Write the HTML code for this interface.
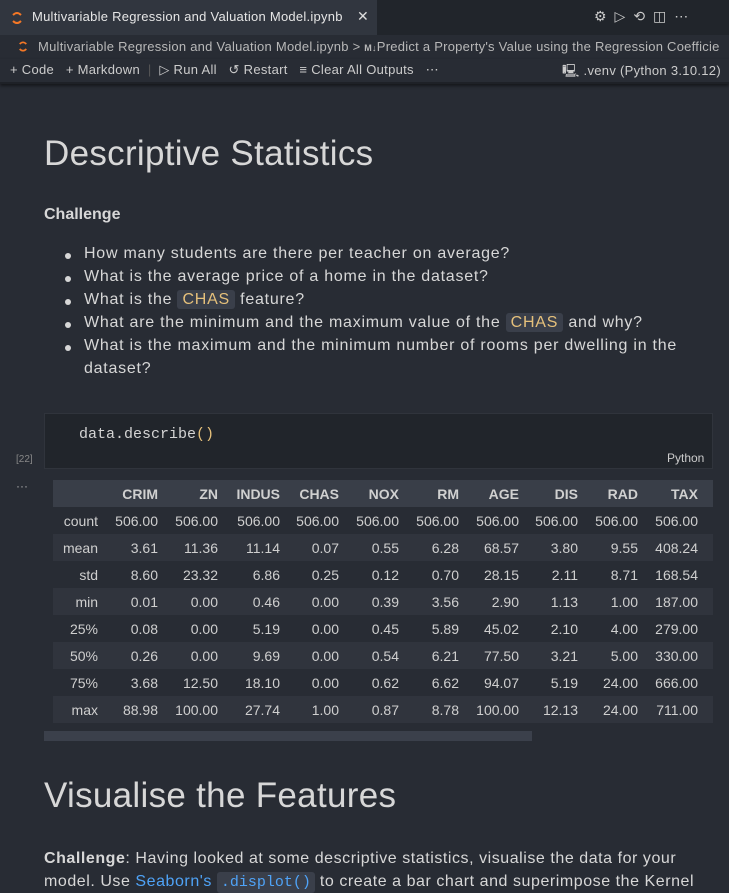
<!DOCTYPE html>
<html><head><meta charset="utf-8"><style>
*{margin:0;padding:0;box-sizing:border-box}
body{width:729px;height:884px;overflow:hidden;background:#282c34;font-family:"Liberation Sans",sans-serif;color:#d4d4d4;position:relative}
.a{position:absolute;white-space:nowrap}
.tabbar{position:absolute;left:0;top:0;width:729px;height:35px;background:#21252b}
.tab{position:absolute;left:0;top:0;width:377px;height:35px;background:#31363f;}
.bc{position:absolute;left:0;top:35px;width:729px;height:24px;background:#282c34}
.tb{position:absolute;left:0;top:59px;width:729px;height:25px;background:#282c34;border-bottom:2px solid #1e2127;box-shadow:0 2px 3px #15171b}
.chip{background:#3a3f4a;color:#e5c07b;font-size:16px;padding:1px 5px;border-radius:3px}
ul{list-style:none}
ul li{position:absolute;left:84px;font-size:16px;letter-spacing:0.75px;color:#d7d7d7;list-style:none}
ul li:before{content:"";position:absolute;left:-19px;top:8px;width:6px;height:6px;border-radius:50%;background:#d7d7d7}
li.nb:before{display:none}
table{position:absolute;left:53px;top:480px;border-collapse:collapse;font-size:14px;color:#cfcfcf}
td,th{height:27px;text-align:right;padding:0}
th{font-weight:bold;color:#d0d0d0}
tr.h{background:#393e48}
tr.s{background:#30343d}
.p{font-size:16px;letter-spacing:0.55px;color:#d7d7d7}
</style></head><body>
<div class="tabbar"></div>
<div class="tab"></div>
<svg class="a" style="left:11px;top:11px" width="12" height="14" viewBox="0 0 12 14"><path d="M2 4 Q6 0 10 4" stroke="#f37726" stroke-width="2" fill="none"/><path d="M2 10 Q6 14 10 10" stroke="#f37726" stroke-width="2" fill="none"/></svg>
<div class="a" style="left:32px;top:9px;font-size:13px;letter-spacing:0.25px;color:#e6e6e6">Multivariable Regression and Valuation Model.ipynb</div>
<div class="a" style="left:357px;top:8px;font-size:14px;color:#ddd">✕</div>
<div class="a" style="left:594px;top:8px;font-size:14px;color:#ccc;letter-spacing:8px">⚙▷⟲◫⋯</div>
<svg class="a" style="left:18px;top:40px" width="10" height="13" viewBox="0 0 12 14"><path d="M2 4 Q6 0 10 4" stroke="#f37726" stroke-width="2" fill="none"/><path d="M2 10 Q6 14 10 10" stroke="#f37726" stroke-width="2" fill="none"/></svg>
<div class="a" style="left:38px;top:39px;font-size:13px;letter-spacing:0.25px;color:#b8b8b8">Multivariable Regression and Valuation Model.ipynb &gt; <span style="font-size:9px;font-weight:bold">M↓</span>Predict a Property's Value using the Regression Coefficie</div>
<div class="tb"></div>
<div class="a" style="left:10px;top:62px;font-size:13px;letter-spacing:0.3px;color:#ccc">+ Code &nbsp;&nbsp;+ Markdown &nbsp;<span style="color:#555">|</span>&nbsp; ▷ Run All &nbsp;&nbsp;↺ Restart &nbsp;&nbsp;≡ Clear All Outputs &nbsp;&nbsp;⋯</div>
<div class="a" style="left:562px;top:62px;font-size:13px;letter-spacing:0.3px;color:#ccc">🖳 .venv (Python 3.10.12)</div>

<div class="a" style="left:44px;top:134px;font-size:35px;letter-spacing:0.3px;color:#d7d7d7">Descriptive Statistics</div>
<div class="a" style="left:44px;top:206px;font-size:16px;font-weight:bold;color:#d7d7d7">Challenge</div>
<ul>
<li style="top:245px">How many students are there per teacher on average?</li>
<li style="top:268px">What is the average price of a home in the dataset?</li>
<li style="top:291px">What is the <span class="chip">CHAS</span> feature?</li>
<li style="top:314px">What are the minimum and the maximum value of the <span class="chip">CHAS</span> and why?</li>
<li style="top:337px">What is the maximum and the minimum number of rooms per dwelling in the</li>
<li style="top:360px" class="nb">dataset?</li>
</ul>

<div class="a" style="left:44px;top:413px;width:669px;height:56px;background:#21252b;border:1px solid #30343c"></div>
<div class="a" style="left:79px;top:426px;font-size:15px;color:#d4d4d4;font-family:'Liberation Mono',monospace">data.describe<span style="color:#e5c07b">()</span></div>
<div class="a" style="left:667px;top:451px;font-size:12px;color:#ccc">Python</div>
<div class="a" style="left:16px;top:454px;font-size:10px;color:#888">[22]</div>
<div class="a" style="left:16px;top:479px;font-size:12px;color:#aaa">···</div>

<table>
<tr class="h"><th style="width:45px"></th><th style="width:60px">CRIM</th><th style="width:60px">ZN</th><th style="width:62px">INDUS</th><th style="width:59px">CHAS</th><th style="width:60px">NOX</th><th style="width:60px">RM</th><th style="width:60px">AGE</th><th style="width:59px">DIS</th><th style="width:60px">RAD</th><th style="width:60px">TAX</th><th style="width:15px"></th></tr>
<tr><td>count</td><td>506.00</td><td>506.00</td><td>506.00</td><td>506.00</td><td>506.00</td><td>506.00</td><td>506.00</td><td>506.00</td><td>506.00</td><td>506.00</td><td></td></tr>
<tr class="s"><td>mean</td><td>3.61</td><td>11.36</td><td>11.14</td><td>0.07</td><td>0.55</td><td>6.28</td><td>68.57</td><td>3.80</td><td>9.55</td><td>408.24</td><td></td></tr>
<tr><td>std</td><td>8.60</td><td>23.32</td><td>6.86</td><td>0.25</td><td>0.12</td><td>0.70</td><td>28.15</td><td>2.11</td><td>8.71</td><td>168.54</td><td></td></tr>
<tr class="s"><td>min</td><td>0.01</td><td>0.00</td><td>0.46</td><td>0.00</td><td>0.39</td><td>3.56</td><td>2.90</td><td>1.13</td><td>1.00</td><td>187.00</td><td></td></tr>
<tr><td>25%</td><td>0.08</td><td>0.00</td><td>5.19</td><td>0.00</td><td>0.45</td><td>5.89</td><td>45.02</td><td>2.10</td><td>4.00</td><td>279.00</td><td></td></tr>
<tr class="s"><td>50%</td><td>0.26</td><td>0.00</td><td>9.69</td><td>0.00</td><td>0.54</td><td>6.21</td><td>77.50</td><td>3.21</td><td>5.00</td><td>330.00</td><td></td></tr>
<tr><td>75%</td><td>3.68</td><td>12.50</td><td>18.10</td><td>0.00</td><td>0.62</td><td>6.62</td><td>94.07</td><td>5.19</td><td>24.00</td><td>666.00</td><td></td></tr>
<tr class="s"><td>max</td><td>88.98</td><td>100.00</td><td>27.74</td><td>1.00</td><td>0.87</td><td>8.78</td><td>100.00</td><td>12.13</td><td>24.00</td><td>711.00</td><td></td></tr>
</table>
<div class="a" style="left:44px;top:731px;width:488px;height:10px;background:#3b404b"></div>

<div class="a" style="left:44px;top:776px;font-size:35px;letter-spacing:0.3px;color:#d7d7d7">Visualise the Features</div>
<div class="a p" style="left:44px;top:850px"><b>Challenge</b>: Having looked at some descriptive statistics, visualise the data for your</div>
<div class="a p" style="left:44px;top:873px">model. Use <span style="color:#4fa3f7">Seaborn's</span> <span style="background:#3a3f4a;color:#4fa3f7;font-family:'Liberation Mono',monospace;font-size:15px;letter-spacing:0;padding:2px 4px;border-radius:3px">.displot()</span> to create a bar chart and superimpose the Kernel</div>
</body></html>
